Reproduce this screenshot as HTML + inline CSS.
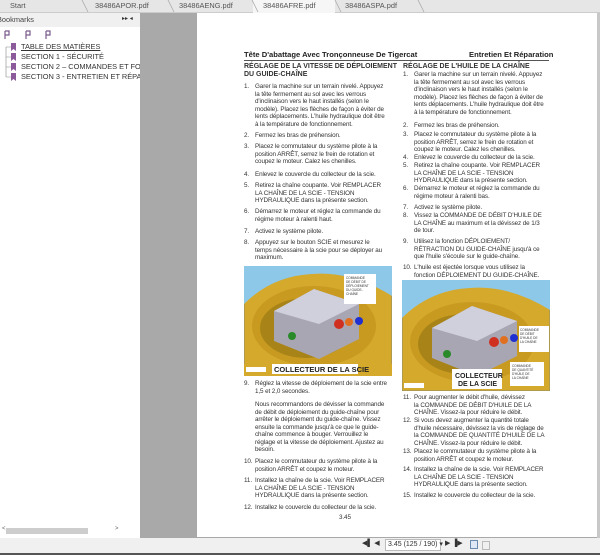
<!DOCTYPE html>
<html><head><meta charset="utf-8"><style>
*{margin:0;padding:0;box-sizing:border-box}
body{width:600px;height:555px;overflow:hidden;background:#f0f0f0;font-family:"Liberation Sans",sans-serif;position:relative}
.a{position:absolute;white-space:nowrap}
.t{font-size:6.3px;line-height:7.5px;color:#333;letter-spacing:-0.1px}
.h{font-size:7px;font-weight:bold;color:#222}
.tab{position:absolute;top:0;height:12px;font-size:7.4px;color:#555;line-height:12px}
</style></head><body>
<div class="a" style="left:0;top:0;width:600px;height:13px;background:#e6e6e6;border-bottom:1px solid #ccc"></div>
<div class="a" style="left:253px;top:0;width:82px;height:13px;background:#f6f6f6"></div>
<div class="tab" style="left:10px">Start</div>
<div class="tab" style="left:95px">38486APOR.pdf</div>
<div class="tab" style="left:179px">38486AENG.pdf</div>
<div class="tab" style="left:263px">38486AFRE.pdf</div>
<div class="tab" style="left:345px">38486ASPA.pdf</div>
<svg class="a" style="left:0;top:0" width="600" height="13"><g stroke="#aaa" stroke-width="0.8"><line x1="82" y1="0" x2="88" y2="12"/><line x1="168" y1="0" x2="174" y2="12"/><line x1="252" y1="0" x2="258" y2="12"/><line x1="335" y1="0" x2="341" y2="12"/><line x1="418" y1="0" x2="424" y2="12"/></g></svg>
<div class="a" style="left:0;top:13px;width:140px;height:525px;background:#fff"></div>
<div class="a" style="left:0;top:13px;width:140px;height:14px;background:#f0f0f0"></div>
<div class="a" style="left:-3px;top:13px;font-size:7.4px;line-height:14px;color:#444">Bookmarks</div>
<div class="a" style="left:122px;top:15px;font-size:6px;color:#333">▸▸ ◂</div>
<svg class="a" style="left:2px;top:29px" width="60" height="12"><g fill="none" stroke="#7a5a8c" stroke-width="1.2"><path d="M3 2v8M3 2h4v4H3"/><path d="M24 2v8M24 2h4v4h-4"/><path d="M44 2v8M44 2h4v4h-4"/></g></svg>
<svg class="a" style="left:2px;top:42px" width="14" height="42"><g stroke="#888" stroke-width="0.6" fill="none"><path d="M4 5h6M4 5v30M4 15h6M4 25h6M4 35h6"/></g><g fill="#8a5a9a"><path d="M9 1h5v8l-2.5-2-2.5 2z"/><path d="M9 11h5v8l-2.5-2-2.5 2z"/><path d="M9 21h5v8l-2.5-2-2.5 2z"/><path d="M9 31h5v8l-2.5-2-2.5 2z"/></g></svg>
<div class="a" style="left:21px;top:42px;font-size:7.4px;line-height:10px;color:#333"><span style="text-decoration:underline">TABLE DES MATIÈRES</span><br>SECTION 1 - SÉCURITÉ<br>SECTION 2 – COMMANDES ET FONCT<br>SECTION 3 - ENTRETIEN ET RÉPARAT</div>
<div class="a" style="left:2px;top:526px;font-size:6px;color:#666">&lt;</div>
<div class="a" style="left:6px;top:528px;width:82px;height:6px;background:#cdcdcd"></div>
<div class="a" style="left:115px;top:526px;font-size:6px;color:#666">&gt;</div>
<div class="a" style="left:140px;top:13px;width:460px;height:525px;background:#a9a9a9"></div>
<div class="a" style="left:197px;top:13px;width:400px;height:524px;background:#fff"></div>
<div class="a" style="left:597px;top:13px;width:3px;height:525px;background:#c8c8c8"></div>
<div class="a h" style="left:244px;top:50px;font-size:7.6px">Tête D'abattage Avec Tronçonneuse De Tigercat</div>
<div class="a h" style="left:469px;top:50px;font-size:7.6px">Entretien Et Réparation</div>
<div class="a" style="left:244px;top:60px;width:305px;height:1px;background:#555"></div>
<div class="a h" style="left:244px;top:63px;line-height:8px;color:#333">RÉGLAGE DE LA VITESSE DE DÉPLOIEMENT<br>DU GUIDE-CHAÎNE</div>
<div class="a h" style="left:403px;top:63px;color:#333">RÉGLAGE DE L'HUILE DE LA CHAÎNE</div>
<div class="a t" style="left:244px;top:83px">1.</div>
<div class="a t" style="left:255px;top:83px">Garer la machine sur un terrain nivelé. Appuyez<br>la tête fermement au sol avec les verrous<br>d'inclinaison vers le haut installés (selon le<br>modèle). Placez les flèches de façon à éviter de<br>lents déplacements. L'huile hydraulique doit être<br>à la température de fonctionnement.</div>
<div class="a t" style="left:244px;top:132px">2.</div><div class="a t" style="left:255px;top:132px">Fermez les bras de préhension.</div>
<div class="a t" style="left:244px;top:143px">3.</div><div class="a t" style="left:255px;top:143px">Placez le commutateur du système pilote à la<br>position ARRÊT, serrez le frein de rotation et<br>coupez le moteur. Calez les chenilles.</div>
<div class="a t" style="left:244px;top:171px">4.</div><div class="a t" style="left:255px;top:171px">Enlevez le couvercle du collecteur de la scie.</div>
<div class="a t" style="left:244px;top:182px">5.</div><div class="a t" style="left:255px;top:182px">Retirez la chaîne coupante. Voir REMPLACER<br>LA CHAÎNE DE LA SCIE - TENSION<br>HYDRAULIQUE dans la présente section.</div>
<div class="a t" style="left:244px;top:208px">6.</div><div class="a t" style="left:255px;top:208px">Démarrez le moteur et réglez la commande du<br>régime moteur à ralenti haut.</div>
<div class="a t" style="left:244px;top:228px">7.</div><div class="a t" style="left:255px;top:228px">Activez le système pilote.</div>
<div class="a t" style="left:244px;top:239px">8.</div><div class="a t" style="left:255px;top:239px">Appuyez sur le bouton SCIE et mesurez le<br>temps nécessaire à la scie pour se déployer au<br>maximum.</div>
<svg class="a" style="left:244px;top:266px" width="148" height="110"><rect width="148" height="110" fill="#d4a92c" stroke="#8a8a70"/><path d="M0 0h148v30q-40-25-80-22q-40 2-68 30z" fill="#8ec8e8"/><ellipse cx="70" cy="60" rx="62" ry="40" fill="#c89a20"/><ellipse cx="62" cy="62" rx="46" ry="30" fill="#a88418"/><path d="M30 45l40-22 45 15v35l-40 20-45-18z" fill="#a9a6b4"/><path d="M30 45l40-22 45 15-40 20z" fill="#d0cfdc"/><circle cx="95" cy="58" r="5" fill="#d03020"/><circle cx="105" cy="56" r="4" fill="#e07020"/><circle cx="115" cy="55" r="4" fill="#2030d0"/><circle cx="48" cy="70" r="4" fill="#2a8a2a"/><rect x="100" y="8" width="32" height="30" fill="#fff"/><text x="102" y="13" font-size="3.2" font-family="Liberation Sans" fill="#333">COMMANDE</text><text x="102" y="17" font-size="3.2" font-family="Liberation Sans" fill="#333">DE DÉBIT DE</text><text x="102" y="21" font-size="3.2" font-family="Liberation Sans" fill="#333">DÉPLOIEMENT</text><text x="102" y="25" font-size="3.2" font-family="Liberation Sans" fill="#333">DU GUIDE-</text><text x="102" y="29" font-size="3.2" font-family="Liberation Sans" fill="#333">CHAÎNE</text><rect x="0" y="98" width="148" height="12" fill="#d4a92c"/><rect x="28" y="98" width="86" height="10" fill="#fff"/><text x="30" y="106" font-size="7.5" font-weight="bold" font-family="Liberation Sans" fill="#222">COLLECTEUR DE LA SCIE</text><rect x="2" y="101" width="20" height="5" fill="#fff"/></svg>
<div class="a t" style="left:244px;top:380px">9.</div><div class="a t" style="left:255px;top:380px">Réglez la vitesse de déploiement de la scie entre<br>1,5 et 2,0 secondes.</div>
<div class="a t" style="left:255px;top:401px">Nous recommandons de dévisser la commande<br>de débit de déploiement du guide-chaîne pour<br>arrêter le déploiement du guide-chaîne. Vissez<br>ensuite la commande jusqu'à ce que le guide-<br>chaîne commence à bouger. Verrouillez le<br>réglage et la vitesse de déploiement. Ajustez au<br>besoin.</div>
<div class="a t" style="left:244px;top:458px">10.</div><div class="a t" style="left:255px;top:458px">Placez le commutateur du système pilote à la<br>position ARRÊT et coupez le moteur.</div>
<div class="a t" style="left:244px;top:477px">11.</div><div class="a t" style="left:255px;top:477px">Installez la chaîne de la scie. Voir REMPLACER<br>LA CHAÎNE DE LA SCIE - TENSION<br>HYDRAULIQUE dans la présente section.</div>
<div class="a t" style="left:244px;top:504px">12.</div><div class="a t" style="left:255px;top:504px">Installez le couvercle du collecteur de la scie.</div>
<div class="a t" style="left:339px;top:514px">3.45</div>
<div class="a t" style="left:403px;top:71px">1.</div><div class="a t" style="left:414px;top:71px">Garer la machine sur un terrain nivelé. Appuyez<br>la tête fermement au sol avec les verrous<br>d'inclinaison vers le haut installés (selon le<br>modèle). Placez les flèches de façon à éviter de<br>lents déplacements. L'huile hydraulique doit être<br>à la température de fonctionnement.</div>
<div class="a t" style="left:403px;top:122px">2.</div><div class="a t" style="left:414px;top:122px">Fermez les bras de préhension.</div>
<div class="a t" style="left:403px;top:131px">3.</div><div class="a t" style="left:414px;top:131px">Placez le commutateur du système pilote à la<br>position ARRÊT, serrez le frein de rotation et<br>coupez le moteur. Calez les chenilles.</div>
<div class="a t" style="left:403px;top:154px">4.</div><div class="a t" style="left:414px;top:154px">Enlevez le couvercle du collecteur de la scie.</div>
<div class="a t" style="left:403px;top:162px">5.</div><div class="a t" style="left:414px;top:162px">Retirez la chaîne coupante. Voir REMPLACER<br>LA CHAÎNE DE LA SCIE - TENSION<br>HYDRAULIQUE dans la présente section.</div>
<div class="a t" style="left:403px;top:185px">6.</div><div class="a t" style="left:414px;top:185px">Démarrez le moteur et réglez la commande du<br>régime moteur à ralenti bas.</div>
<div class="a t" style="left:403px;top:204px">7.</div><div class="a t" style="left:414px;top:204px">Activez le système pilote.</div>
<div class="a t" style="left:403px;top:212px">8.</div><div class="a t" style="left:414px;top:212px">Vissez la COMMANDE DE DÉBIT D'HUILE DE<br>LA CHAÎNE au maximum et la dévissez de 1/3<br>de tour.</div>
<div class="a t" style="left:403px;top:238px">9.</div><div class="a t" style="left:414px;top:238px">Utilisez la fonction DÉPLOIEMENT/<br>RÉTRACTION DU GUIDE-CHAÎNE jusqu'à ce<br>que l'huile s'écoule sur le guide-chaîne.</div>
<div class="a t" style="left:403px;top:264px">10.</div><div class="a t" style="left:414px;top:264px">L'huile est éjectée lorsque vous utilisez la<br>fonction DÉPLOIEMENT DU GUIDE-CHAÎNE.</div>
<svg class="a" style="left:402px;top:280px" width="148" height="111"><rect width="148" height="111" fill="#d4a92c" stroke="#8a8a70"/><path d="M0 0h148v30q-40-25-80-22q-40 2-68 30z" fill="#8ec8e8"/><ellipse cx="70" cy="62" rx="62" ry="40" fill="#c89a20"/><ellipse cx="62" cy="64" rx="46" ry="30" fill="#a88418"/><path d="M30 48l40-22 45 15v35l-40 20-45-18z" fill="#a9a6b4"/><path d="M30 48l40-22 45 15-40 20z" fill="#d0cfdc"/><circle cx="92" cy="62" r="5" fill="#d03020"/><circle cx="102" cy="60" r="4" fill="#e07020"/><circle cx="112" cy="58" r="4" fill="#2030d0"/><circle cx="45" cy="74" r="4" fill="#2a8a2a"/><rect x="117" y="46" width="30" height="26" fill="#fff"/><text x="118" y="51" font-size="3.2" font-family="Liberation Sans" fill="#333">COMMANDE</text><text x="118" y="55" font-size="3.2" font-family="Liberation Sans" fill="#333">DE DÉBIT</text><text x="118" y="59" font-size="3.2" font-family="Liberation Sans" fill="#333">D'HUILE DE</text><text x="118" y="63" font-size="3.2" font-family="Liberation Sans" fill="#333">LA CHAÎNE</text><rect x="108" y="82" width="34" height="24" fill="#fff"/><text x="110" y="87" font-size="3.2" font-family="Liberation Sans" fill="#333">COMMANDE</text><text x="110" y="91" font-size="3.2" font-family="Liberation Sans" fill="#333">DE QUANTITÉ</text><text x="110" y="95" font-size="3.2" font-family="Liberation Sans" fill="#333">D'HUILE DE</text><text x="110" y="99" font-size="3.2" font-family="Liberation Sans" fill="#333">LA CHAÎNE</text><rect x="50" y="89" width="50" height="20" fill="#fff"/><text x="53" y="98" font-size="7" font-weight="bold" font-family="Liberation Sans" fill="#222">COLLECTEUR</text><text x="56" y="106" font-size="7" font-weight="bold" font-family="Liberation Sans" fill="#222">DE LA SCIE</text><rect x="2" y="103" width="20" height="5" fill="#fff"/></svg>
<div class="a t" style="left:403px;top:394px">11.</div><div class="a t" style="left:414px;top:394px">Pour augmenter le débit d'huile, dévissez<br>la COMMANDE DE DÉBIT D'HUILE DE LA<br>CHAÎNE. Vissez-la pour réduire le débit.</div>
<div class="a t" style="left:403px;top:417px">12.</div><div class="a t" style="left:414px;top:417px">Si vous devez augmenter la quantité totale<br>d'huile nécessaire, dévissez la vis de réglage de<br>la COMMANDE DE QUANTITÉ D'HUILE DE LA<br>CHAÎNE. Vissez-la pour réduire le débit.</div>
<div class="a t" style="left:403px;top:448px">13.</div><div class="a t" style="left:414px;top:448px">Placez le commutateur du système pilote à la<br>position ARRÊT et coupez le moteur.</div>
<div class="a t" style="left:403px;top:466px">14.</div><div class="a t" style="left:414px;top:466px">Installez la chaîne de la scie. Voir REMPLACER<br>LA CHAÎNE DE LA SCIE - TENSION<br>HYDRAULIQUE dans la présente section.</div>
<div class="a t" style="left:403px;top:492px">15.</div><div class="a t" style="left:414px;top:492px">Installez le couvercle du collecteur de la scie.</div>
<div class="a" style="left:0;top:538px;width:600px;height:15px;background:#f0f0f0"></div>
<div class="a" style="left:0;top:553px;width:600px;height:2px;background:#555"></div>
<div class="a" style="left:362px;top:539px;font-size:7px;color:#333">◀▌ ◀</div>
<div class="a" style="left:385px;top:539px;width:56px;height:12px;border:1px solid #bbb;background:#fff;font-size:7px;line-height:10px;color:#333;padding-left:2px">3.45 (125 / 190) ▾</div>
<div class="a" style="left:445px;top:539px;font-size:7px;color:#333">▶ ▐▶</div>
<div class="a" style="left:470px;top:540px;width:8px;height:9px;border:1px solid #6a8ab0;background:#dde8f4"></div>
<div class="a" style="left:482px;top:541px;width:8px;height:9px;border:1px solid #bbb"></div>
</body></html>
